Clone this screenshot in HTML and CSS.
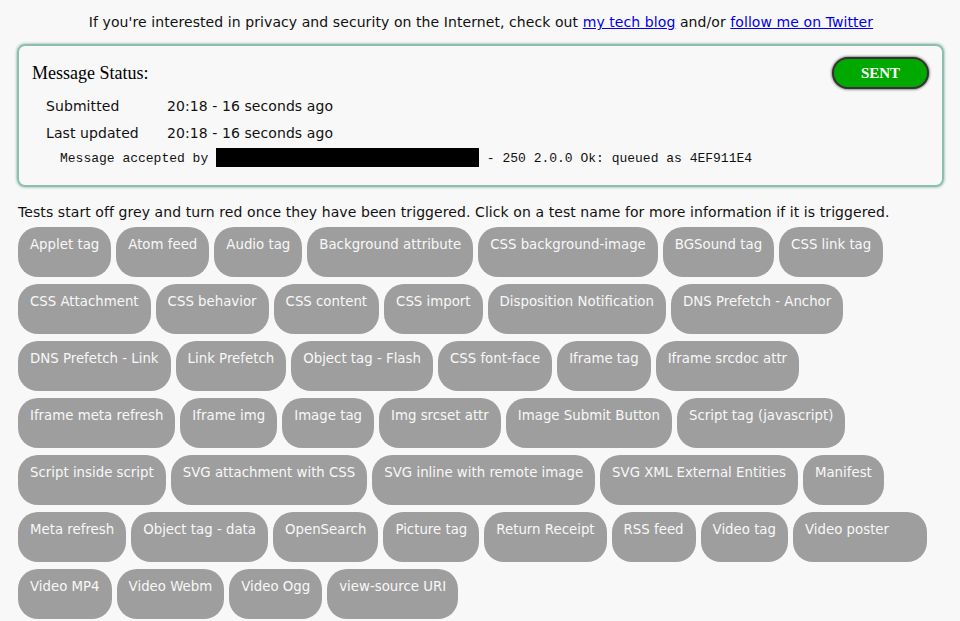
FILE: index.html
```html
<!DOCTYPE html>
<html>
<head>
<meta charset="utf-8">
<link rel="stylesheet" href="styles.css">
</head>
<body>
<p class="intro">If you're interested in privacy and security on the Internet, check out <a href="#">my tech blog</a> and/or <a href="#">follow me on Twitter</a></p>
<div class="status">
  <div class="status-head">
    <h2 class="status-title">Message Status:</h2>
    <div class="sent">SENT</div>
  </div>
  <div class="rows">
    <div class="row"><span class="lbl">Submitted</span><span class="val">20:18 - 16 seconds ago</span></div>
    <div class="row"><span class="lbl">Last updated</span><span class="val">20:18 - 16 seconds ago</span></div>
  </div>
  <div class="smtp">Message accepted by <span class="redact"></span> - 250 2.0.0 Ok: queued as 4EF911E4</div>
</div>
<p class="note">Tests start off grey and turn red once they have been triggered. Click on a test name for more information if it is triggered.</p>
<div class="tags">
  <span class="tag">Applet tag</span>
  <span class="tag">Atom feed</span>
  <span class="tag">Audio tag</span>
  <span class="tag">Background attribute</span>
  <span class="tag">CSS background-image</span>
  <span class="tag">BGSound tag</span>
  <span class="tag">CSS link tag</span>
  <span class="tag">CSS Attachment</span>
  <span class="tag">CSS behavior</span>
  <span class="tag">CSS content</span>
  <span class="tag">CSS import</span>
  <span class="tag">Disposition Notification</span>
  <span class="tag">DNS Prefetch - Anchor</span>
  <span class="tag">DNS Prefetch - Link</span>
  <span class="tag">Link Prefetch</span>
  <span class="tag">Object tag - Flash</span>
  <span class="tag">CSS font-face</span>
  <span class="tag">Iframe tag</span>
  <span class="tag">Iframe srcdoc attr</span>
  <span class="tag">Iframe meta refresh</span>
  <span class="tag">Iframe img</span>
  <span class="tag">Image tag</span>
  <span class="tag">Img srcset attr</span>
  <span class="tag">Image Submit Button</span>
  <span class="tag">Script tag (javascript)</span>
  <span class="tag">Script inside script</span>
  <span class="tag">SVG attachment with CSS</span>
  <span class="tag">SVG inline with remote image</span>
  <span class="tag">SVG XML External Entities</span>
  <span class="tag">Manifest</span>
  <span class="tag">Meta refresh</span>
  <span class="tag">Object tag - data</span>
  <span class="tag">OpenSearch</span>
  <span class="tag">Picture tag</span>
  <span class="tag">Return Receipt</span>
  <span class="tag">RSS feed</span>
  <span class="tag">Video tag</span>
  <span class="tag tag-wide">Video poster</span>
  <span class="tag">Video MP4</span>
  <span class="tag">Video Webm</span>
  <span class="tag">Video Ogg</span>
  <span class="tag">view-source URI</span>
</div>
</body>
</html>
```
FILE: styles.css
```css
html, body {
  background: #f8f8f8;
}
body {
  margin: 0;
  padding: 0 16px 0 18px;
  font-family: "DejaVu Sans", Verdana, sans-serif;
  font-size: 14px;
  letter-spacing: 0.08px;
  color: #111;
}
.intro {
  margin: 0;
  padding-top: 13px;
  line-height: 18px;
  text-align: center;
}
.intro a {
  color: #0000ee;
}
.status {
  margin: 13px 0 0 -1px;
  border: 2px solid #8cc0ad;
  border-radius: 8px;
  box-shadow: 0 0 3px #6fa893;
  padding: 11px 12px 8px 13px;
  height: 143px;
  box-sizing: border-box;
}
.status-head {
  display: flex;
  justify-content: space-between;
  align-items: flex-start;
}
.status-title {
  margin: 6px 0 0 0;
  font-family: "Liberation Serif", "Times New Roman", serif;
  font-weight: normal;
  font-size: 18px;
  letter-spacing: 0;
  color: #000;
}
.sent {
  width: 93px;
  height: 28px;
  margin-right: 1px;
  border: 2px solid #333;
  border-radius: 16px;
  background: #00a800;
  box-shadow: 0 0 3px #222;
  color: #fff;
  font-family: "Liberation Serif", "Times New Roman", serif;
  font-weight: bold;
  font-size: 15px;
  letter-spacing: 0;
  line-height: 28px;
  text-align: center;
}
.rows {
  margin: 7px 0 0 14px;
}
.row {
  display: flex;
  height: 27px;
  line-height: 20px;
}
.lbl {
  width: 121px;
}
.smtp {
  margin-left: 28px;
  margin-top: -2px;
  font-family: "Liberation Mono", "Courier New", monospace;
  font-size: 13px;
  letter-spacing: 0;
  line-height: 20px;
  color: #111;
}
.redact {
  display: inline-block;
  width: 263px;
  height: 19px;
  background: #000;
  vertical-align: -5px;
}
.note {
  margin: 16px 0 6px 0;
  line-height: 18px;
}
.tags {
  display: flex;
  flex-wrap: wrap;
  gap: 7px 5px;
}
.tag {
  height: 50px;
  box-sizing: border-box;
  padding: 9px 12px 0 12px;
  border-radius: 20px;
  background: #9e9e9e;
  color: #f8f8f8;
  font-size: 13.33px;
  letter-spacing: 0;
  line-height: 18px;
  white-space: nowrap;
}
.tag-wide {
  padding-right: 38px;
}
```
